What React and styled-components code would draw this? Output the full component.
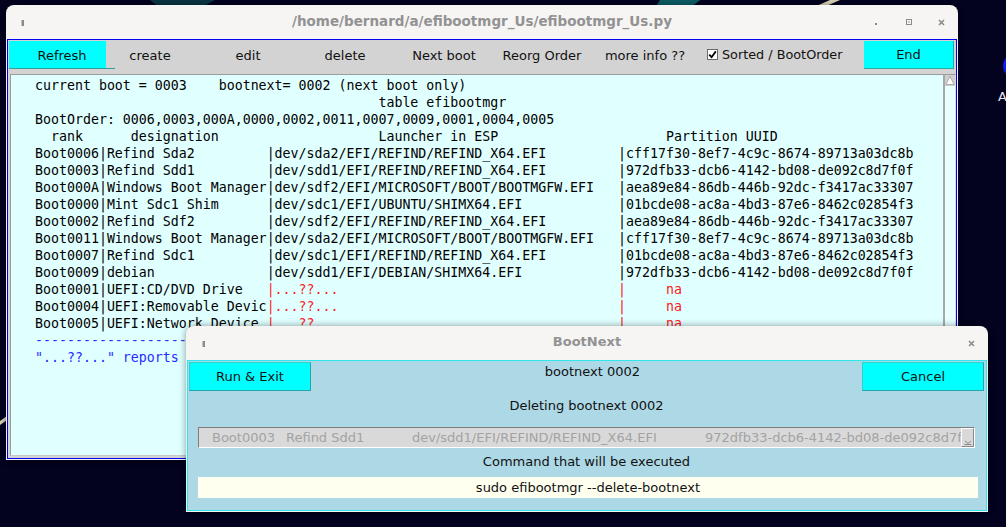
import React from 'react';
import styled, { createGlobalStyle } from 'styled-components';

const Global = createGlobalStyle`
  html, body { margin: 0; padding: 0; background: #03021f; }
  body { width: 1006px; height: 527px; overflow: hidden; font-family: "DejaVu Sans", sans-serif; }
`;

const Desktop = styled.div`
  position: relative;
  width: 1006px;
  height: 527px;
  overflow: hidden;
  background: #03021f;
`;

const Wallpaper = styled.svg`
  position: absolute;
  left: 0;
  top: 0;
`;

const DeskLabel = styled.div`
  position: absolute;
  left: 998px;
  top: 89px;
  font: 13px "DejaVu Sans", sans-serif;
  color: #e8e8f0;
`;

const Window = styled.div`
  position: absolute;
  left: ${p => p.$x}px;
  top: ${p => p.$y}px;
  width: ${p => p.$w}px;
  height: ${p => p.$h}px;
  display: flex;
  flex-direction: column;
  background: #f6f5f4;
  border-radius: 8px 8px 0 0;
  box-shadow: 0 1px 6px rgba(0, 0, 0, 0.45);
`;

const TitleBar = styled.div`
  flex: none;
  height: 34px;
  display: grid;
  grid-template-columns: 1fr auto 1fr;
  align-items: center;
  font: bold ${p => p.$fs || 13}px "DejaVu Sans", sans-serif;
  color: #929292;
`;

const TitleText = styled.div`
  margin-top: -3px;
`;

const AppMark = styled.span`
  display: block;
  width: 2px;
  height: 6px;
  margin-left: ${p => p.$left}px;
  margin-top: 1px;
  background: #8a8a8a;
  border-left: 1px solid #c4c4c4;
`;

const Controls = styled.div`
  justify-self: end;
  display: flex;
`;

const Ctrl = styled.div`
  width: 33px;
  height: 20px;
  display: flex;
  align-items: center;
  justify-content: center;
`;

const MainBody = styled.div`
  flex: 1;
  margin: 0 1px 1px 1px;
  border: 1px solid #0000f0;
  background: #d3d3d3;
  display: flex;
  flex-direction: column;
`;

const Toolbar = styled.div`
  flex: none;
  height: 28px;
  padding: 1px 0 1px 1px;
  display: flex;
  align-items: stretch;
`;

const ToolButton = styled.div`
  position: relative;
  width: ${p => p.$w}px;
  flex: none;
  display: flex;
  align-items: center;
  justify-content: center;
  padding-left: ${p => p.$pl || 0}px;
  box-sizing: border-box;
  font: 13px "DejaVu Sans", sans-serif;
  color: #111;
  background: ${p => (p.$active ? '#00ffff' : 'transparent')};
  ${p => p.$edge ? 'border-right: 1px solid #2aa8a8; border-bottom: 1px solid #2aa8a8;' : ''}
  ${p => p.$focus ? `
    &::after {
      content: "";
      position: absolute;
      left: 0;
      bottom: 0;
      width: 106px;
      height: 1px;
      background: #2f9e9e;
    }
  ` : ''}
`;

const CheckItem = styled.div`
  width: 140px;
  flex: none;
  display: flex;
  align-items: center;
  gap: 4px;
  padding-left: 1px;
  margin-top: -2px;
  font: 12.8px "DejaVu Sans", sans-serif;
  color: #111;
`;

const CheckBox = styled.div`
  width: 11px;
  height: 11px;
  box-sizing: border-box;
  background: #fff;
  border: 1px solid #6a6a6a;
  display: flex;
  align-items: center;
  justify-content: center;
`;

const Spacer = styled.div`
  width: ${p => p.$w}px;
  flex: none;
`;

const TextFrame = styled.div`
  flex: 1;
  margin: 4px 0 2px 2px;
  display: flex;
  min-height: 0;
`;

const TextBox = styled.div`
  flex: 1;
  box-sizing: border-box;
  background: #e0ffff;
  border-top: 1px solid #9c9c9c;
  border-left: 1px solid #9c9c9c;
  border-bottom: 1px solid #c8c8c8;
  border-right: 2px solid #a8a8a8;
  padding: 2px 0 0 24px;
  overflow: hidden;
  font: 13.27px "DejaVu Sans Mono", monospace;
  color: #000;
`;

const Line = styled.div`
  height: 17px;
  line-height: 17px;
  white-space: pre;
  color: ${p => p.$c || '#000'};
`;

const Red = styled.span`
  color: #ff1a1a;
`;

const ScrollBar = styled.div`
  width: 10px;
  flex: none;
  background: #e6ffff;
  border-top: 1px solid #9c9c9c;
  border-right: 1px solid #d8d8d8;
  display: flex;
  flex-direction: column;
`;

const Dialog = styled(Window)`
  box-shadow: 0 0 7px rgba(0, 0, 0, 0.4);
`;

const DialogBody = styled.div`
  flex: 1;
  margin: 0 1px 1px 1px;
  border: 1px solid #2de6ee;
  background: #add8e6;
  padding: 1px 2px 0 1px;
  display: flex;
  flex-direction: column;
  font: 13px "DejaVu Sans", sans-serif;
  color: #111;
`;

const TopRow = styled.div`
  display: flex;
  align-items: flex-start;
  height: 29px;
`;

const CyanButton = styled.div`
  width: 122px;
  height: 29px;
  box-sizing: border-box;
  flex: none;
  background: #00ffff;
  border: 1px solid #25a5a5;
  border-top-color: #30d0d0;
  border-left-color: #30d0d0;
  display: flex;
  align-items: center;
  justify-content: center;
`;

const CenterLabel = styled.div`
  flex: 1;
  text-align: center;
  padding: ${p => p.$pt || 0}px 0 0 ${p => p.$pl || 0}px;
  line-height: 16px;
`;

const Note = styled.div`
  text-align: center;
  line-height: 16px;
  margin-top: ${p => p.$mt}px;
  padding-left: ${p => p.$pl || 0}px;
`;

const Combo = styled.div`
  margin: ${p => p.$mt}px 9px 0 9px;
  height: 21px;
  box-sizing: border-box;
  background: #d9d9d9;
  border-top: 1px solid #7e7e7e;
  border-left: 1px solid #7e7e7e;
  border-bottom: 1px solid #ffffff;
  border-right: 1px solid #ffffff;
  display: flex;
  align-items: center;
  color: #a3a3a3;
  overflow: hidden;
`;

const ComboText = styled.div`
  flex: 1;
  display: flex;
  padding-left: 13px;
  white-space: pre;
  overflow: hidden;
  min-width: 0;
`;

const Cell = styled.span`
  flex: none;
  width: ${p => p.$w ? `${p.$w}px` : 'auto'};
`;

const ComboArrow = styled.div`
  width: 13px;
  height: 19px;
  flex: none;
  box-sizing: border-box;
  background: #d9d9d9;
  border-top: 1px solid #fff;
  border-left: 1px solid #fff;
  border-bottom: 1px solid #8a8a8a;
  border-right: 1px solid #8a8a8a;
  display: flex;
  align-items: flex-end;
  justify-content: center;
  padding-bottom: 1px;
`;

const Entry = styled.div`
  margin: ${p => p.$mt}px 6px 0 9px;
  height: 21px;
  background: #fffff0;
  display: flex;
  align-items: center;
  justify-content: center;
  color: #111;
`;

const pad = (s, n) => s.padEnd(n, ' ');

const bootRows = [
  ['Boot0006', 'Refind Sda2', 'dev/sda2/EFI/REFIND/REFIND_X64.EFI', 'cff17f30-8ef7-4c9c-8674-89713a03dc8b'],
  ['Boot0003', 'Refind Sdd1', 'dev/sdd1/EFI/REFIND/REFIND_X64.EFI', '972dfb33-dcb6-4142-bd08-de092c8d7f0f'],
  ['Boot000A', 'Windows Boot Manager', 'dev/sdf2/EFI/MICROSOFT/BOOT/BOOTMGFW.EFI', 'aea89e84-86db-446b-92dc-f3417ac33307'],
  ['Boot0000', 'Mint Sdc1 Shim', 'dev/sdc1/EFI/UBUNTU/SHIMX64.EFI', '01bcde08-ac8a-4bd3-87e6-8462c02854f3'],
  ['Boot0002', 'Refind Sdf2', 'dev/sdf2/EFI/REFIND/REFIND_X64.EFI', 'aea89e84-86db-446b-92dc-f3417ac33307'],
  ['Boot0011', 'Windows Boot Manager', 'dev/sda2/EFI/MICROSOFT/BOOT/BOOTMGFW.EFI', 'cff17f30-8ef7-4c9c-8674-89713a03dc8b'],
  ['Boot0007', 'Refind Sdc1', 'dev/sdc1/EFI/REFIND/REFIND_X64.EFI', '01bcde08-ac8a-4bd3-87e6-8462c02854f3'],
  ['Boot0009', 'debian', 'dev/sdd1/EFI/DEBIAN/SHIMX64.EFI', '972dfb33-dcb6-4142-bd08-de092c8d7f0f'],
  ['Boot0001', 'UEFI:CD/DVD Drive', null, null],
  ['Boot0004', 'UEFI:Removable Devic', null, null],
  ['Boot0005', 'UEFI:Network Device', null, null],
];

const toolButtons = [
  { label: 'Refresh', w: 97, pl: 9, active: true, focus: true },
  { label: 'create', w: 88 },
  { label: 'edit', w: 108 },
  { label: 'delete', w: 86 },
  { label: 'Next boot', w: 112 },
  { label: 'Reorg Order', w: 84 },
  { label: 'more info ??', w: 122 },
];

const MinIcon = () => (
  <svg width="6" height="6" viewBox="0 0 6 6"><rect x="2" y="4" width="2" height="2" fill="#8a8a8a" /></svg>
);
const MaxIcon = () => (
  <svg width="6" height="6" viewBox="0 0 6 6"><rect x="0.5" y="0.5" width="5" height="5" fill="none" stroke="#8a8a8a" /><rect x="2" y="2" width="2" height="2" fill="#c8c8c8" /></svg>
);
const CloseIcon = () => (
  <svg width="7" height="7" viewBox="0 0 7 7"><path d="M1 1 L6 6 M6 1 L1 6" stroke="#8a8a8a" strokeWidth="1.6" /></svg>
);

function MainWindow() {
  return (
    <Window $x={6} $y={5} $w={952} $h={455}>
      <TitleBar $fs={13.5}>
        <AppMark $left={15} />
        <TitleText>/home/bernard/a/efibootmgr_Us/efibootmgr_Us.py</TitleText>
        <Controls>
          <Ctrl><MinIcon /></Ctrl>
          <Ctrl><MaxIcon /></Ctrl>
          <Ctrl><CloseIcon /></Ctrl>
        </Controls>
      </TitleBar>
      <MainBody>
        <Toolbar>
          {toolButtons.map(b => (
            <ToolButton key={b.label} $w={b.w} $pl={b.pl} $active={b.active} $focus={b.focus}>
              {b.label}
            </ToolButton>
          ))}
          <CheckItem>
            <CheckBox>
              <svg width="9" height="9" viewBox="0 0 9 9">
                <path d="M1.2 4.6 L3.6 7.2 L7.8 1.4" fill="none" stroke="#000" strokeWidth="1.8" />
              </svg>
            </CheckBox>
            Sorted / BootOrder
          </CheckItem>
          <Spacer $w={17} />
          <ToolButton $w={90} $active $edge>End</ToolButton>
        </Toolbar>
        <TextFrame>
          <TextBox>
            <Line>{'current boot = 0003    bootnext= 0002 (next boot only)'}</Line>
            <Line>{' '.repeat(43) + 'table efibootmgr'}</Line>
            <Line>{'BootOrder: 0006,0003,000A,0000,0002,0011,0007,0009,0001,0004,0005'}</Line>
            <Line>{pad(pad('  rank', 12) + 'designation', 43) + pad('Launcher in ESP', 36) + 'Partition UUID'}</Line>
            {bootRows.map(([id, name, path, uuid]) => (
              <Line key={id}>
                {id + '|' + pad(name, 20)}
                {path ? (
                  '|' + pad(path, 43) + '|' + uuid
                ) : (
                  <Red>{pad('|...??...', 44) + '|     na'}</Red>
                )}
              </Line>
            ))}
            <Line $c="#2b2bff">{'-'.repeat(110)}</Line>
            <Line $c="#2b2bff">{'"...??..." reports a launcher not found in the ESP'}</Line>
          </TextBox>
          <ScrollBar>
            <svg width="10" height="11" viewBox="0 0 10 11">
              <rect x="0" y="0" width="10" height="11" fill="#cfcfcf" />
              <polygon points="5,1.5 9,9.5 1,9.5" fill="#ffffff" stroke="#a0a0a0" strokeWidth="0.8" />
            </svg>
          </ScrollBar>
        </TextFrame>
      </MainBody>
    </Window>
  );
}

function BootNextDialog() {
  return (
    <Dialog $x={186} $y={326} $w={802} $h={186}>
      <TitleBar>
        <AppMark $left={16} />
        <TitleText>BootNext</TitleText>
        <Controls>
          <Ctrl><CloseIcon /></Ctrl>
        </Controls>
      </TitleBar>
      <DialogBody>
        <TopRow>
          <CyanButton>Run &amp; Exit</CyanButton>
          <CenterLabel $pt={2} $pl={12}>bootnext 0002</CenterLabel>
          <CyanButton>Cancel</CyanButton>
        </TopRow>
        <Note $mt={7} $pl={-6}>Deleting bootnext 0002</Note>
        <Combo $mt={13}>
          <ComboText>
            <Cell $w={74}>Boot0003</Cell>
            <Cell $w={126}>Refind Sdd1</Cell>
            <Cell $w={293}>dev/sdd1/EFI/REFIND/REFIND_X64.EFI</Cell>
            <Cell>972dfb33-dcb6-4142-bd08-de092c8d7f0f</Cell>
          </ComboText>
          <ComboArrow>
            <svg width="8" height="5" viewBox="0 0 8 5">
              <path d="M1 1 L4 3.5 L7 1" fill="none" stroke="#8a8a8a" strokeWidth="1" />
              <path d="M0.5 4.5 L7.5 4.5" stroke="#8a8a8a" strokeWidth="1" />
            </svg>
          </ComboArrow>
        </Combo>
        <Note $mt={6} $pl={-4}>Command that will be executed</Note>
        <Entry $mt={7}>sudo efibootmgr --delete-bootnext</Entry>
      </DialogBody>
    </Dialog>
  );
}

export default function App() {
  return (
    <Desktop>
      <Global />
      <Wallpaper width="1006" height="527" viewBox="0 0 1006 527">
        <polygon points="150,0 215,0 200,8 160,8" fill="#0b3442" />
        <polygon points="660,0 700,0 690,8 655,8" fill="#0c5a63" />
        <polygon points="812,8 822,8 840,0 830,0" fill="#d6cfae" />
        <circle cx="1016" cy="66" r="13" fill="#0a1ef0" />
        <polygon points="0,421 0,425 7,420 7,416" fill="#d6cfae" />
      </Wallpaper>
      <DeskLabel>A</DeskLabel>
      <MainWindow />
      <BootNextDialog />
    </Desktop>
  );
}
